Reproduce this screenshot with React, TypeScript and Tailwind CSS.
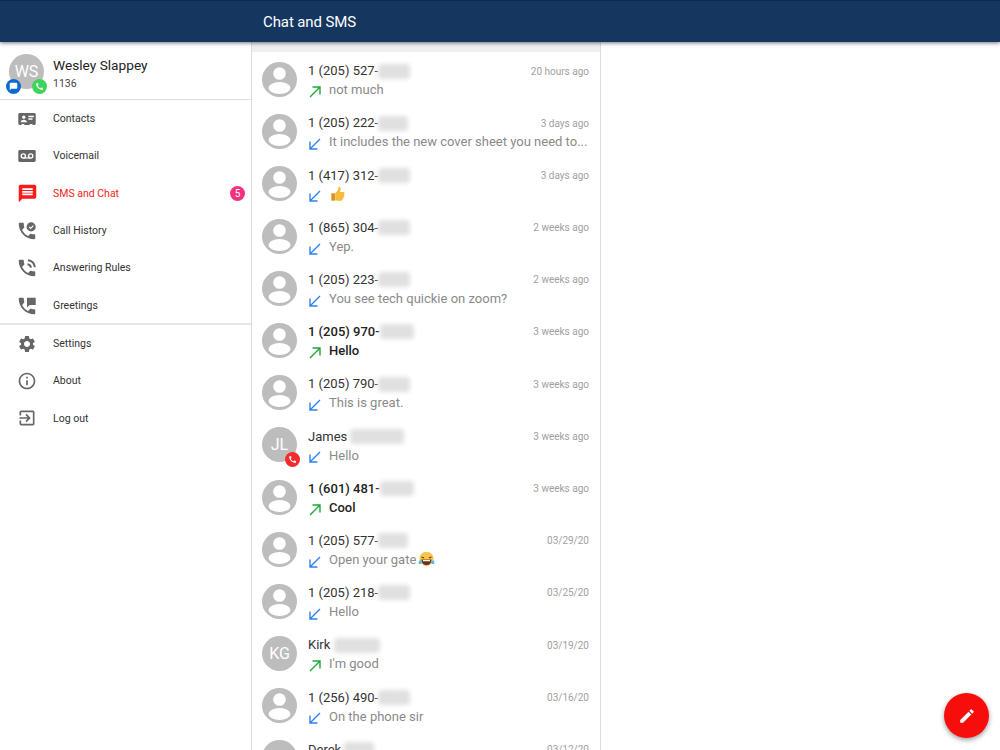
import { ReactNode } from "react";
import { MdCall, MdChatBubble, MdEdit, MdInfoOutline, MdMessage, MdOutlineExitToApp, MdSettings } from "react-icons/md";

const phone =
  "M6.62 10.79c1.44 2.83 3.76 5.14 6.59 6.59l2.2-2.2c.27-.27.67-.36 1.02-.24 1.12.37 2.33.57 3.57.57.55 0 1 .45 1 1V20c0 .55-.45 1-1 1-9.39 0-17-7.61-17-17 0-.55.45-1 1-1h3.5c.55 0 1 .45 1 1 0 1.25.2 2.45.57 3.57.11.35.03.74-.25 1.02l-2.2 2.2z";

function Svg({ children }: { children: ReactNode }) {
  return (
    <svg viewBox="0 0 24 24" width="22" height="22" fill="currentColor">
      {children}
    </svg>
  );
}

const ContactsIcon = () => (
  <Svg>
    <path d="M4 5.500h16a1.500 1.500 0 0 1 1.500 1.500v10A1.500 1.500 0 0 1 20 18.500h-2v-1h-3v1H9v-1H6v1H4A1.500 1.500 0 0 1 2.500 17V7A1.500 1.500 0 0 1 4 5.500z" />
    <circle cx="8.500" cy="10" r="1.800" fill="#fff" />
    <path d="M5 15.500c0-1.700 1.700-2.700 3.500-2.700s3.500 1 3.500 2.700z" fill="#fff" />
    <path d="M13.500 8.500h6V10h-6zM13.500 11.300h4.500v1.400h-4.500z" fill="#fff" />
  </Svg>
);

const VoicemailIcon = () => (
  <Svg>
    <rect x="2.500" y="5.500" width="19" height="13" rx="1.500" />
    <circle cx="8" cy="12" r="2.300" fill="none" stroke="#fff" strokeWidth="1.500" />
    <circle cx="16" cy="12" r="2.300" fill="none" stroke="#fff" strokeWidth="1.500" />
    <path d="M8 13.500h8v1.300H8z" fill="#fff" />
  </Svg>
);

const CallHistoryIcon = () => (
  <Svg>
    <path d={phone} />
    <circle cx="16.500" cy="7.500" r="5" />
    <path d="M14.300 7.500l1.700 1.700 2.900-3" fill="none" stroke="#fff" strokeWidth="1.200" />
  </Svg>
);

const RulesIcon = () => (
  <Svg>
    <path d={phone} />
    <path d="M12.500 8c2.200.3 3.500 1.600 3.800 3.500M13 3.500c3.900.4 7 3.400 7.500 7.500" fill="none" stroke="currentColor" strokeWidth="2.200" />
  </Svg>
);

const GreetingsIcon = () => (
  <Svg>
    <path d={phone} />
    <path d="M12 3h9.500v8H15l-3 2.500z" />
  </Svg>
);

type NavItem = { label: string; icon: ReactNode; active?: boolean; badge?: number };

const topNav: NavItem[] = [
  { label: "Contacts", icon: <ContactsIcon /> },
  { label: "Voicemail", icon: <VoicemailIcon /> },
  { label: "SMS and Chat", icon: <MdMessage size={21} />, active: true, badge: 5 },
  { label: "Call History", icon: <CallHistoryIcon /> },
  { label: "Answering Rules", icon: <RulesIcon /> },
  { label: "Greetings", icon: <GreetingsIcon /> },
];

const bottomNav: NavItem[] = [
  { label: "Settings", icon: <MdSettings size={20} /> },
  { label: "About", icon: <MdInfoOutline size={20} /> },
  { label: "Log out", icon: <MdOutlineExitToApp size={20} /> },
];

type Convo = {
  name: string;
  blur: number;
  time: string;
  text: string;
  out: boolean;
  unread?: boolean;
  initials?: string;
  missed?: boolean;
  emoji?: "thumb" | "laugh";
};

const convos: Convo[] = [
  { name: "1 (205) 527-", blur: 32, time: "20 hours ago", text: "not much", out: true },
  { name: "1 (205) 222-", blur: 30, time: "3 days ago", text: "It includes the new cover sheet you need to...", out: false },
  { name: "1 (417) 312-", blur: 32, time: "3 days ago", text: "", out: false, emoji: "thumb" },
  { name: "1 (865) 304-", blur: 32, time: "2 weeks ago", text: "Yep.", out: false },
  { name: "1 (205) 223-", blur: 32, time: "2 weeks ago", text: "You see tech quickie on zoom?", out: false },
  { name: "1 (205) 970-", blur: 34, time: "3 weeks ago", text: "Hello", out: true, unread: true },
  { name: "1 (205) 790-", blur: 32, time: "3 weeks ago", text: "This is great.", out: false },
  { name: "James", blur: 54, time: "3 weeks ago", text: "Hello", out: false, initials: "JL", missed: true },
  { name: "1 (601) 481-", blur: 34, time: "3 weeks ago", text: "Cool", out: true, unread: true },
  { name: "1 (205) 577-", blur: 30, time: "03/29/20", text: "Open your gate", out: false, emoji: "laugh" },
  { name: "1 (205) 218-", blur: 32, time: "03/25/20", text: "Hello", out: false },
  { name: "Kirk", blur: 46, time: "03/19/20", text: "I'm good", out: true, initials: "KG" },
  { name: "1 (256) 490-", blur: 32, time: "03/16/20", text: "On the phone sir", out: false },
  { name: "Derek", blur: 30, time: "03/12/20", text: "Ok", out: false, initials: "DB" },
];

function Thumb() {
  return (
    <svg viewBox="0 0 24 24" width="16" height="16" className="ml-px">
      <path d="M2 11h6v11H2z" fill="#d9951f" />
      <path d="M8 11l4-5 1-5c2 0 3.500 1.500 3 4l-1 4h5c2 0 2.500 3 1 4 1 1.500.5 3-.8 3.500.5 1.500-.2 3-1.500 3.200.2 1.300-.7 2.300-2 2.300H11c-1.500 0-3-1-3-2z" fill="#f5bb3c" />
    </svg>
  );
}

function Laugh() {
  return (
    <svg viewBox="0 0 24 24" width="17" height="17">
      <circle cx="12" cy="11" r="10" fill="#f7c548" />
      <path d="M5 8.500l3.500 1.500M19 8.500L15.500 10" stroke="#5b3a12" strokeWidth="1.600" fill="none" />
      <path d="M5 12h14c0 5-3 8-7 8s-7-3-7-8z" fill="#6b2f1a" />
      <path d="M7 12.500h10v2H7z" fill="#fff" />
      <path d="M1 14c2-1 4-.500 5 1-.500 3-3 4-5 3zM23 14c-2-1-4-.500-5 1 .500 3 3 4 5 3z" fill="#5cb6ee" />
    </svg>
  );
}

function Arrow({ out }: { out: boolean }) {
  return (
    <svg
      viewBox="0 0 12 12"
      width="12"
      height="12"
      fill="none"
      strokeWidth="1.400"
      stroke={out ? "#1fa83a" : "#2f80f0"}
      className="shrink-0"
    >
      {out ? <path d="M1 11L11 1M3.500 1H11v7.500" /> : <path d="M11 1L1 11M8.500 11H1V3.500" />}
    </svg>
  );
}

function Avatar({ convo }: { convo: Convo }) {
  return (
    <div className="relative h-[35px] w-[35px] shrink-0 rounded-full bg-[#bdbdbd]">
      {convo.initials ? (
        <div className="flex h-full items-center justify-center text-[16px] text-white">{convo.initials}</div>
      ) : (
        <svg viewBox="0 0 35 35" width="35" height="35" fill="#fff">
          <circle cx="17.500" cy="11.500" r="6.300" />
          <ellipse cx="17.500" cy="26" rx="11" ry="6" />
        </svg>
      )}
      {convo.missed && (
        <div className="absolute right-[-3px] bottom-[-5px] flex h-[15px] w-[15px] items-center justify-center rounded-full bg-[#f52a2a] text-white">
          <MdCall size={9} />
        </div>
      )}
    </div>
  );
}

function Row({ convo }: { convo: Convo }) {
  const nameColor = convo.unread ? "font-medium text-[#222]" : "text-[#333]";
  return (
    <div className="flex h-[52.2px] shrink-0 items-start pt-[10px] pr-[11px] pl-[10px]">
      <Avatar convo={convo} />
      <div className="ml-[11px] min-w-0 flex-1">
        <div className="flex h-[18px] items-center">
          <span className={`text-[13px] whitespace-pre ${nameColor}`}>
            {convo.name}
            {!/\d-$/.test(convo.name) && " "}
          </span>
          <span
            className="h-[15px] rounded-sm bg-[#e0e0e0] blur-[2px]"
            style={{ width: convo.blur }}
          />
          <span className="ml-auto text-[10px] text-[#a0a0a0]">{convo.time}</span>
        </div>
        <div className="mt-px flex h-[18px] items-center">
          <span className="mt-[4px] mr-[8px] ml-px">
            <Arrow out={convo.out} />
          </span>
          <span className={`text-[13px] whitespace-nowrap ${convo.unread ? "font-medium text-[#222]" : "text-[#8a8a8a]"}`}>
            {convo.text}
          </span>
          {convo.emoji === "thumb" && <Thumb />}
          {convo.emoji === "laugh" && (
            <span className="ml-[2px]">
              <Laugh />
            </span>
          )}
        </div>
      </div>
    </div>
  );
}

function Nav({ item }: { item: NavItem }) {
  return (
    <div className={`flex h-[37.400px] items-center pr-[6px] pl-[16px] ${item.active ? "text-[#fb1a1a]" : "text-[#333]"}`}>
      <span className={`flex w-[22px] justify-center ${item.active ? "" : "text-[#666]"}`}>{item.icon}</span>
      <span className="ml-[15px] text-[10.500px]">{item.label}</span>
      {item.badge && (
        <span className="ml-auto flex h-[15px] w-[15px] items-center justify-center rounded-full bg-[#f5307f] text-[10px] text-white">
          {item.badge}
        </span>
      )}
    </div>
  );
}

export default function App() {
  return (
    <div className="relative flex h-[750px] w-[1000px] flex-col overflow-hidden bg-white font-['Roboto',Arial,sans-serif]">
      {/* Header */}
      <header className="z-10 flex h-[42px] shrink-0 items-center border-t border-[#0f2a4e] bg-[#14365f] pt-px pl-[263px] shadow-[0_1px_4px_rgba(0,0,0,0.55)]">
        <h1 className="text-[15px] tracking-[-0.1px] text-white">Chat and SMS</h1>
      </header>

      <div className="flex min-h-0 flex-1">
        {/* Sidebar */}
        <aside className="w-[252px] shrink-0 border-r border-[#dcdcdc]">
          <div className="flex h-[58px] items-start border-b border-[#dcdcdc] pt-[12px] pl-[9px]">
            <div className="relative h-[35px] w-[35px] rounded-full bg-[#bdbdbd]">
              <div className="flex h-full items-center justify-center text-[16px] text-white">WS</div>
              <div className="absolute bottom-[-5px] left-[-3px] flex h-[15px] w-[15px] items-center justify-center rounded-full bg-[#0a6ad0] text-white">
                <MdChatBubble size={9} />
              </div>
              <div className="absolute right-[-3px] bottom-[-5px] flex h-[15px] w-[15px] items-center justify-center rounded-full bg-[#3fd35c] text-white">
                <MdCall size={9} />
              </div>
            </div>
            <div className="ml-[9px]">
              <div className="text-[13.700px] leading-[22px] text-[#222]">Wesley Slappey</div>
              <div className="text-[10.500px] leading-[16px] text-[#444]">1136</div>
            </div>
          </div>
          <div className="h-[225px] border-b-2 border-[#e6e6e6]">
            {topNav.map((item) => (
              <Nav key={item.label} item={item} />
            ))}
          </div>
          {bottomNav.map((item) => (
            <Nav key={item.label} item={item} />
          ))}
        </aside>

        {/* Conversation list */}
        <main className="flex w-[349px] shrink-0 flex-col overflow-hidden border-r border-[#dcdcdc]">
          <div className="h-[10px] shrink-0 bg-[#f0f0f0]" />
          {convos.map((convo) => (
            <Row key={convo.name} convo={convo} />
          ))}
        </main>
      </div>

      <button className="absolute right-[11px] bottom-[12px] flex h-[45px] w-[45px] items-center justify-center rounded-full bg-[#f80d0d] text-white shadow-[0_2px_5px_rgba(0,0,0,0.4)]">
        <MdEdit size={18} />
      </button>
    </div>
  );
}
